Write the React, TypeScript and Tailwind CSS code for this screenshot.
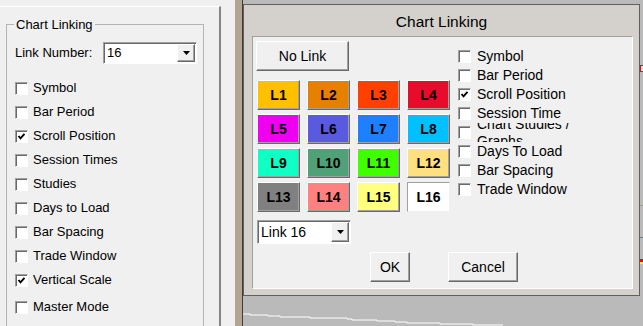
import React from 'react';

const raised =
  'border border-t-white border-l-white border-r-[#696969] border-b-[#696969] shadow-[inset_-1px_-1px_0_#a0a0a0]';
const sunken =
  'border border-t-[#a0a0a0] border-l-[#a0a0a0] border-r-white border-b-white shadow-[inset_1px_1px_0_#696969]';

const links = [
  { label: 'L1', bg: 'bg-[#ffc000]' },
  { label: 'L2', bg: 'bg-[#e68000]' },
  { label: 'L3', bg: 'bg-[#ff4000]' },
  { label: 'L4', bg: 'bg-[#e80c2c]' },
  { label: 'L5', bg: 'bg-[#f000f0]' },
  { label: 'L6', bg: 'bg-[#5a5ae0]' },
  { label: 'L7', bg: 'bg-[#1e80ff]' },
  { label: 'L8', bg: 'bg-[#00c0ff]' },
  { label: 'L9', bg: 'bg-[#10ffc4]' },
  { label: 'L10', bg: 'bg-[#50a078]' },
  { label: 'L11', bg: 'bg-[#40ff00]' },
  { label: 'L12', bg: 'bg-[#ffe080]' },
  { label: 'L13', bg: 'bg-[#808080]' },
  { label: 'L14', bg: 'bg-[#ff8080]' },
  { label: 'L15', bg: 'bg-[#ffff80]' },
];

const leftOptions = [
  { label: 'Symbol', checked: false },
  { label: 'Bar Period', checked: false },
  { label: 'Scroll Position', checked: true },
  { label: 'Session Times', checked: false },
  { label: 'Studies', checked: false },
  { label: 'Days to Load', checked: false },
  { label: 'Bar Spacing', checked: false },
  { label: 'Trade Window', checked: false },
  { label: 'Vertical Scale', checked: true },
];

const dialogOptions = [
  { label: 'Symbol', checked: false },
  { label: 'Bar Period', checked: false },
  { label: 'Scroll Position', checked: true },
  { label: 'Session Time', checked: false },
  { label: 'Chart Studies / Graphs', checked: false, wrap: true },
  { label: 'Days To Load', checked: false },
  { label: 'Bar Spacing', checked: false },
  { label: 'Trade Window', checked: false },
];

function Box({ checked }: { checked: boolean }) {
  return (
    <span className={`w-[13px] h-[13px] shrink-0 bg-white flex items-center justify-center ${sunken}`}>
      {checked && (
        <svg width="9" height="9" viewBox="0 0 9 9">
          <polyline points="1.5,4 3.5,6.3 7.5,1.8" fill="none" stroke="#000" strokeWidth="1.9" />
        </svg>
      )}
    </span>
  );
}

function Arrow() {
  return (
    <svg width="7" height="4" viewBox="0 0 7 4">
      <polygon points="0,0 7,0 3.5,4" fill="#000" />
    </svg>
  );
}

function Combo({ text, w, h, btnW, btnH, size }: { text: string; w: string; h: string; btnW: string; btnH: string; size: string }) {
  return (
    <div className={`${w} ${h} ${sunken} bg-white flex items-center justify-between pr-[1px]`}>
      <span className={`${size} pl-[3px] text-black`}>{text}</span>
      <span className={`${btnW} ${btnH} bg-[#f0f0f0] ${raised} flex items-center justify-center`}>
        <Arrow />
      </span>
    </div>
  );
}

export default function App() {
  return (
    <div className="flex w-[643px] h-[326px] overflow-hidden bg-[#f0f0f0] font-['Liberation_Sans',Arial,sans-serif] text-black">
      {/* settings panel */}
      <div className="w-[221px] h-full pt-[6px] shrink-0">
        <div className="h-full border-t border-white border-r-2 border-r-[#858585]">
          <fieldset className="ml-[6px] mt-[10px] w-[198px] h-[330px] border border-[#b4b4b4]">
            <legend className="ml-[7px] px-[2px] text-[13px] leading-[15px]">Chart Linking</legend>
            <div className="mt-[10px] pl-[8px] flex items-center h-[22px]">
              <span className="w-[88px] text-[13px]">Link Number:</span>
              <Combo text="16" w="w-[94px]" h="h-[22px]" btnW="w-[18px]" btnH="h-[18px]" size="text-[13px]" />
            </div>
            <div className="mt-[12px] pl-[8px]">
              {leftOptions.map((o) => (
                <div key={o.label} className="h-[24px] flex items-center gap-[5px] text-[13px]">
                  <Box checked={o.checked} />
                  <span>{o.label}</span>
                </div>
              ))}
              <div className="mt-[3px] h-[24px] flex items-center gap-[5px] text-[13px]">
                <Box checked={false} />
                <span>Master Mode</span>
              </div>
            </div>
          </fieldset>
        </div>
      </div>

      <div className="w-[14px] shrink-0 bg-[#f0f0f0]" />
      <div className="w-[7px] shrink-0 bg-[#b4a493]" />

      {/* chart area with dialog */}
      <div className="relative flex-1 bg-[#bababa] border-l border-[#3c3c3c]">
        <svg className="absolute inset-0" width="400" height="326" viewBox="0 0 400 326">
          <polyline
            points="0,314 7,314 7,315 25,315 25,316 37,316 37,317 67,317 67,318 104,318 104,319 109,319 109,320 134,320 134,321 152,321 152,322 164,322 164,323 197,323 197,324 230,324 230,325 260,325"
            fill="none"
            stroke="#ffffff"
            strokeWidth="1"
          />
          <rect x="397.5" y="65.5" width="3" height="6" fill="#fde0e0" stroke="#ff0000" strokeWidth="1" />
          <line x1="397" y1="205.5" x2="400" y2="205.5" stroke="#ff8040" />
          <line x1="397" y1="237.5" x2="400" y2="237.5" stroke="#3080ff" />
          <rect x="397" y="259" width="3" height="3" fill="#ff0000" />
          <rect x="397" y="262" width="3" height="2" fill="#ffe060" />
        </svg>

        <div className="relative mt-[4px] w-[397px] h-[292px] border border-[#5f5f5f] bg-[#d4d0cc] flex flex-col">
          <div className="h-[31px] flex items-center justify-center pt-[3px] text-[15.5px]">Chart Linking</div>
          <div className="ml-[8px] w-[381px] h-[253px] border border-t-[#a0a0a0] border-l-[#a0a0a0] border-r-white border-b-white bg-[#f0f0f0] flex flex-col">
            <div className="flex">
              <div className="w-[197px] pl-[4px] pt-[4px] flex flex-col">
                <button className={`-ml-[1px] w-[93px] h-[30px] bg-[#f0f0f0] text-[14px] ${raised}`}>No Link</button>
                <div className="mt-[9px] grid grid-cols-[repeat(4,43px)] gap-x-[7px] gap-y-[4px]">
                  {links.map((l) => (
                    <div key={l.label} className={`h-[30px] ${l.bg} ${raised} flex items-center justify-center text-[14px] font-bold`}>
                      {l.label}
                    </div>
                  ))}
                  <div className="h-[30px] bg-white border border-t-[#a0a0a0] border-l-[#a0a0a0] border-r-[#f0f0f0] border-b-[#f0f0f0] flex items-center justify-center text-[14px] font-bold">
                    L16
                  </div>
                </div>
                <div className="mt-[8px]">
                  <Combo text="Link 16" w="w-[94px]" h="h-[24px]" btnW="w-[18px]" btnH="h-[20px]" size="text-[14px]" />
                </div>
              </div>
              <div className="ml-[8px] pt-[10px] flex flex-col">
                {dialogOptions.map((o) => (
                  <div key={o.label} className="h-[19px] flex items-center gap-[6px] text-[14px]">
                    <Box checked={o.checked} />
                    {o.wrap ? (
                      <span className="h-[19px] overflow-hidden flex items-center">
                        <span className="w-[100px] shrink-0 leading-[17px]">{o.label}</span>
                      </span>
                    ) : (
                      <span className="leading-[17px]">{o.label}</span>
                    )}
                  </div>
                ))}
              </div>
            </div>
            <div className="mt-[8px] pl-[117px] flex gap-[38px]">
              <button className={`w-[40px] h-[30px] bg-[#f0f0f0] text-[14px] ${raised}`}>OK</button>
              <button className={`w-[70px] h-[30px] bg-[#f0f0f0] text-[14px] ${raised}`}>Cancel</button>
            </div>
          </div>
        </div>
      </div>
    </div>
  );
}
